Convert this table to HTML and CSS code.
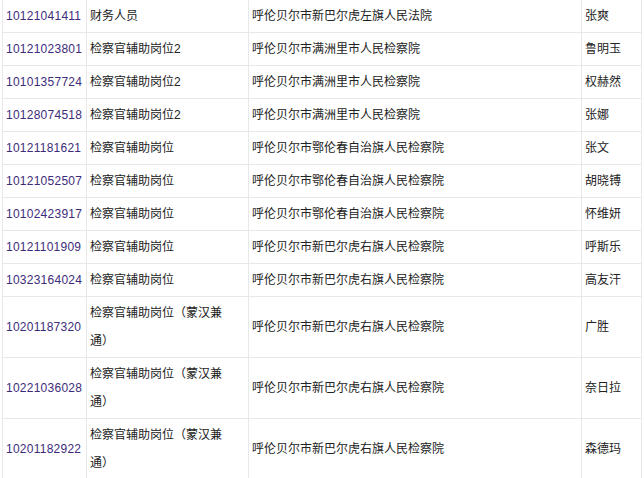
FILE: index.html
```html
<!DOCTYPE html>
<html lang="zh-CN">
<head>
<meta charset="utf-8">
<title>名单</title>
<link rel="stylesheet" href="styles.css">
</head>
<body>
<table class="list">
  <colgroup>
    <col class="c-no">
    <col class="c-pos">
    <col class="c-org">
    <col class="c-name">
  </colgroup>
  <tbody>
    <tr><td class="no">10121041411</td><td>财务人员</td><td>呼伦贝尔市新巴尔虎左旗人民法院</td><td>张爽</td></tr>
    <tr><td class="no">10121023801</td><td>检察官辅助岗位2</td><td>呼伦贝尔市满洲里市人民检察院</td><td>鲁明玉</td></tr>
    <tr><td class="no">10101357724</td><td>检察官辅助岗位2</td><td>呼伦贝尔市满洲里市人民检察院</td><td>权赫然</td></tr>
    <tr><td class="no">10128074518</td><td>检察官辅助岗位2</td><td>呼伦贝尔市满洲里市人民检察院</td><td>张娜</td></tr>
    <tr><td class="no">10121181621</td><td>检察官辅助岗位</td><td>呼伦贝尔市鄂伦春自治旗人民检察院</td><td>张文</td></tr>
    <tr><td class="no">10121052507</td><td>检察官辅助岗位</td><td>呼伦贝尔市鄂伦春自治旗人民检察院</td><td>胡晓镈</td></tr>
    <tr><td class="no">10102423917</td><td>检察官辅助岗位</td><td>呼伦贝尔市鄂伦春自治旗人民检察院</td><td>怀维妍</td></tr>
    <tr><td class="no">10121101909</td><td>检察官辅助岗位</td><td>呼伦贝尔市新巴尔虎右旗人民检察院</td><td>呼斯乐</td></tr>
    <tr><td class="no">10323164024</td><td>检察官辅助岗位</td><td>呼伦贝尔市新巴尔虎右旗人民检察院</td><td>高友汗</td></tr>
    <tr><td class="no">10201187320</td><td>检察官辅助岗位（蒙汉兼通）</td><td>呼伦贝尔市新巴尔虎右旗人民检察院</td><td>广胜</td></tr>
    <tr><td class="no">10221036028</td><td>检察官辅助岗位（蒙汉兼通）</td><td>呼伦贝尔市新巴尔虎右旗人民检察院</td><td>奈日拉</td></tr>
    <tr><td class="no">10201182922</td><td>检察官辅助岗位（蒙汉兼通）</td><td>呼伦贝尔市新巴尔虎右旗人民检察院</td><td>森德玛</td></tr>
  </tbody>
</table>
</body>
</html>
```
FILE: styles.css
```css
html, body {
  margin: 0;
  padding: 0;
  background: #fff;
}
body {
  padding-left: 2px;
  font-family: "Liberation Sans", "Noto Sans CJK SC", sans-serif;
  font-size: 12px;
  color: #222;
  text-spacing-trim: space-all;
}
.list {
  margin-top: -1px;
  width: 639px;
  table-layout: fixed;
  border-collapse: collapse;
}
.c-no { width: 84px; }
.c-pos { width: 162px; }
.c-org { width: 333px; }
.c-name { width: 60px; }
.list td {
  border: 1px solid #e8e8e8;
  padding: 2px 5px 2px 3px;
  line-height: 28px;
  vertical-align: middle;
  text-align: left;
  text-spacing-trim: space-all;
}
.list td.no {
  color: #3d2c7a;
  letter-spacing: 0.25px;
}
```
